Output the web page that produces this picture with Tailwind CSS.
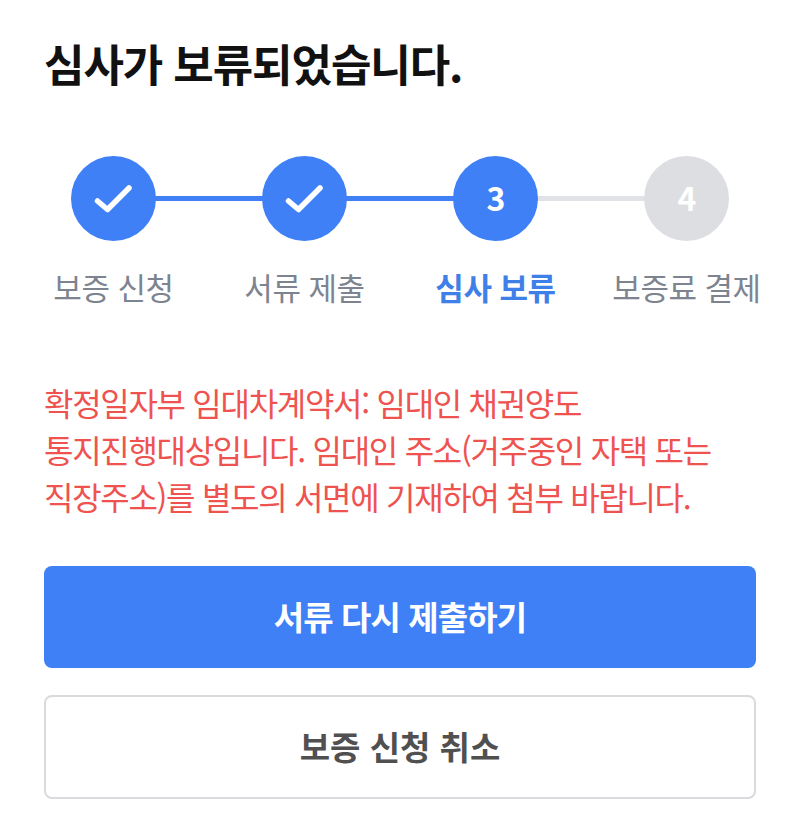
<!DOCTYPE html>
<html lang="ko">
<head>
<meta charset="UTF-8">
<script src="https://cdn.jsdelivr.net/npm/@tailwindcss/browser@4"></script>
</head>
<body class="bg-white font-['Noto_Sans_CJK_KR','Noto_Sans',sans-serif]">
<div class="w-[800px] h-[824px] overflow-hidden px-[44px] pt-[33px]">
    <h1 class="text-[44px] leading-[60px] font-bold text-[#111111] tracking-[-1.1px]">심사가 보류되었습니다.</h1>

    <!-- steps -->
    <div class="mt-[63px] -mx-[44px] grid grid-cols-[repeat(4,191px)] pl-[18px]">
        <div class="flex flex-col items-center">
            <div class="relative w-full flex justify-center">
                <div class="absolute top-[40px] left-1/2 w-full h-[5px] bg-[#3f80f7]"></div>
                <div class="relative w-[85px] h-[85px] rounded-full bg-[#3f80f7] flex items-center justify-center">
                    <svg width="40" height="32" viewBox="0 0 40 32" fill="none" stroke="white" stroke-width="5.5" stroke-linecap="round" stroke-linejoin="round"><path d="M3.5 18L13.5 26.5L35 5"/></svg>
                </div>
            </div>
            <div class="mt-[26px] text-[31px] leading-[40px] text-[#7d8490] tracking-[-0.5px] whitespace-nowrap">보증 신청</div>
        </div>
        <div class="flex flex-col items-center">
            <div class="relative w-full flex justify-center">
                <div class="absolute top-[40px] left-1/2 w-full h-[5px] bg-[#3f80f7]"></div>
                <div class="relative w-[85px] h-[85px] rounded-full bg-[#3f80f7] flex items-center justify-center">
                    <svg width="40" height="32" viewBox="0 0 40 32" fill="none" stroke="white" stroke-width="5.5" stroke-linecap="round" stroke-linejoin="round"><path d="M3.5 18L13.5 26.5L35 5"/></svg>
                </div>
            </div>
            <div class="mt-[26px] text-[31px] leading-[40px] text-[#7d8490] tracking-[-0.5px] whitespace-nowrap">서류 제출</div>
        </div>
        <div class="flex flex-col items-center">
            <div class="relative w-full flex justify-center">
                <div class="absolute top-[40px] left-1/2 w-full h-[5px] bg-[#e0e2e7]"></div>
                <div class="relative w-[85px] h-[85px] rounded-full bg-[#3f80f7] flex items-center justify-center text-white text-[32px] leading-[40px] font-bold pb-[3px] pl-[1px]">3</div>
            </div>
            <div class="mt-[26px] text-[31px] leading-[40px] font-bold text-[#3f7fe8] tracking-[-0.5px] whitespace-nowrap">심사 보류</div>
        </div>
        <div class="flex flex-col items-center">
            <div class="relative w-[85px] h-[85px] rounded-full bg-[#dcdee2] flex items-center justify-center text-white text-[32px] leading-[40px] font-bold pb-[3px] pl-[1px]">4</div>
            <div class="mt-[26px] text-[31px] leading-[40px] text-[#7d8490] tracking-[-0.5px] whitespace-nowrap">보증료 결제</div>
        </div>
    </div>

    <!-- reason -->
    <p class="mt-[72px] text-[32px] leading-[47px] text-[#ee5350] tracking-[-1.3px] whitespace-nowrap">확정일자부 임대차계약서: 임대인 채권양도<br>통지진행대상입니다. 임대인 주소(거주중인 자택 또는<br>직장주소)를 별도의 서면에 기재하여 첨부 바랍니다.</p>

    <!-- buttons -->
    <button class="mt-[46px] block w-[712px] h-[102px] rounded-[8px] bg-[#3f80f7] text-white text-[33px] font-bold tracking-[-0.9px]">서류 다시 제출하기</button>
    <button class="mt-[27px] block w-[712px] h-[104px] rounded-[8px] border-[2.5px] border-[#d8dadd] bg-white text-[#505050] text-[33px] font-bold">보증 신청 취소</button>
</div>
</body>
</html>
